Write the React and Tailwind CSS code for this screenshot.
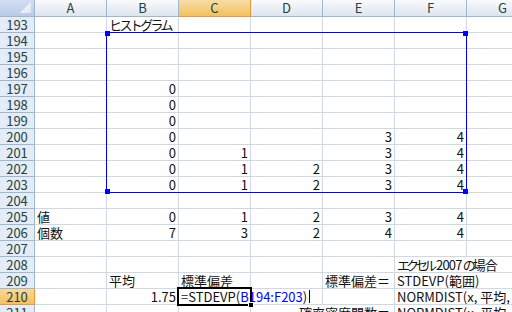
import React from "react";

const COLS = ["A", "B", "C", "D", "E", "F", "G"];

const Kana = ({ children }) => <span className="tracking-[-2.6px] mr-[2px]">{children}</span>;

const DATA = {
  193: { B: { t: <Kana>ヒストグラム</Kana>, l: true } },
  197: { B: "0" },
  198: { B: "0" },
  199: { B: "0" },
  200: { B: "0", E: "3", F: "4" },
  201: { B: "0", C: "1", E: "3", F: "4" },
  202: { B: "0", C: "1", D: "2", E: "3", F: "4" },
  203: { B: "0", C: "1", D: "2", E: "3", F: "4" },
  205: { A: { t: "値", l: true }, B: "0", C: "1", D: "2", E: "3", F: "4" },
  206: { A: { t: "個数", l: true }, B: "7", C: "3", D: "2", E: "4", F: "4" },
  208: {
    F: {
      t: (
        <>
          <span className="tracking-[-4px] mr-[3px]">エクセル</span>
          <span className="tracking-[-0.8px]">2007</span>
          <span className="tracking-[-3px] ml-[1px]">の</span>
          <span className="tracking-[-1px]">場合</span>
        </>
      ),
      l: true,
      wide: true,
    },
  },
  209: {
    B: { t: "平均", l: true },
    C: { t: "標準偏差", l: true },
    E: { t: "標準偏差＝", l: true },
    F: { t: "STDEVP(範囲)", l: true, wide: true },
  },
  210: {
    B: "1.75",
    C: { edit: true },
    F: { t: "NORMDIST(x, 平均, 標準偏差, false)", l: true, wide: true },
  },
  211: {
    D: { t: "確率密度関数＝", wideDE: true },
    F: { t: "NORMDIST(x, 平均, 標準偏差, true)", l: true, wide: true },
  },
};

const cellBase =
  "shrink-0 h-[16px] border-r border-b border-[#d0d7e5] px-[2px] text-[13px] leading-[15px] whitespace-nowrap text-[#111]";

function RowHeader({ n, selected }) {
  return (
    <div
      className={
        "w-[35px] shrink-0 h-[16px] border-r border-b text-center text-[13px] leading-[15px] text-[#27413e] " +
        (selected
          ? "bg-gradient-to-b from-[#f9d99f] to-[#f1c15f] border-[#f29536]"
          : "bg-[#e4ecf7] border-[#9eb6ce]")
      }
    >
      {n}
    </div>
  );
}

function Row({ n }) {
  const d = DATA[n] || {};
  const out = [];
  for (let i = 0; i < COLS.length; i++) {
    const c = COLS[i];
    let v = d[c];
    if (typeof v === "string") v = { t: v };
    if (v && (v.wide || v.wideDE)) {
      out.push(
        <div
          key={c}
          className={
            cellBase + " w-[144px] overflow-hidden " + (v.wide ? "text-left" : "text-right pr-[4px]")
          }
        >
          {v.t}
        </div>
      );
      i++;
      continue;
    }
    if (v && v.edit) {
      out.push(
        <div key={c} className={cellBase + " w-[72px]"}>
          <span className="relative z-10 inline-flex items-center bg-white pr-[3px]">
            <span>
              =STDEVP(<span className="text-[#0000ff]">B194:F203</span>)
            </span>
            <span className="w-[1px] h-[13px] bg-black ml-[2px]" />
          </span>
        </div>
      );
      continue;
    }
    out.push(
      <div
        key={c}
        className={cellBase + " w-[72px] " + (v && v.l ? "text-left" : "text-right")}
      >
        {v ? v.t : ""}
      </div>
    );
  }
  return (
    <div className="flex">
      <RowHeader n={n} selected={n === 210} />
      {out}
    </div>
  );
}

export default function App() {
  const rows = [];
  for (let n = 193; n <= 211; n++) rows.push(n);
  return (
    <div
      lang="ja"
      className="relative w-[512px] h-[312px] overflow-hidden bg-white font-['Noto_Sans_CJK_JP',sans-serif]"
    >
      <div className="flex h-[17px]">
        <div className="flex items-end justify-end p-[3px] w-[35px] shrink-0 h-[17px] border-r border-b border-[#9eb6ce] bg-gradient-to-b from-[#d3def1] to-[#b9cbe9]">
          <svg width="11" height="11" viewBox="0 0 11 11">
            <defs>
              <linearGradient id="tri" x1="0" y1="0" x2="1" y2="1">
                <stop offset="0" stopColor="#ffffff" />
                <stop offset="1" stopColor="#dfe4ec" />
              </linearGradient>
            </defs>
            <polygon points="11,0 11,11 0,11" fill="url(#tri)" />
          </svg>
        </div>
        {COLS.map((c) => (
          <div
            key={c}
            className={
              "w-[72px] shrink-0 h-[17px] border-r border-b text-center text-[13px] leading-[16px] text-[#27413e] " +
              (c === "C"
                ? "bg-gradient-to-b from-[#f9dca6] to-[#f1c15f] border-[#f29536]"
                : "bg-gradient-to-b from-[#f9fafc] to-[#dee5ee] border-[#9eb6ce]")
            }
          >
            {c}
          </div>
        ))}
      </div>
      {rows.map((n) => (
        <Row key={n} n={n} />
      ))}

      {/* selected range B194:F203 (overlay) */}
      <div className="absolute left-[106px] top-[32px] w-[361px] h-[161px] border border-[#0000ff] pointer-events-none">
        <div className="absolute -left-[2px] -top-[2px] w-[5px] h-[5px] bg-[#0000ff]" />
        <div className="absolute -right-[2px] -top-[2px] w-[5px] h-[5px] bg-[#0000ff]" />
        <div className="absolute -left-[2px] -bottom-[2px] w-[5px] h-[5px] bg-[#0000ff]" />
        <div className="absolute -right-[2px] -bottom-[2px] w-[5px] h-[5px] bg-[#0000ff]" />
      </div>

      {/* active cell C210 (overlay) */}
      <div className="absolute left-[177px] top-[287px] w-[75px] h-[19px] border-2 border-black pointer-events-none z-20">
        <div className="absolute -right-[4px] -bottom-[4px] w-[6px] h-[6px] bg-black border border-white" />
      </div>
    </div>
  );
}
